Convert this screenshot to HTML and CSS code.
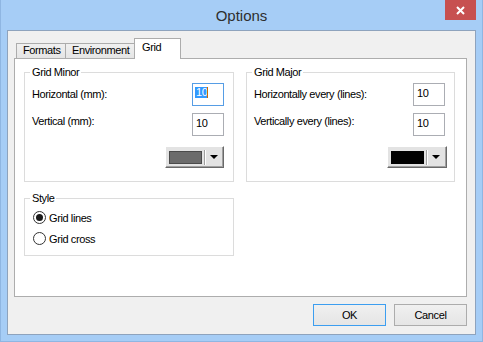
FILE: index.html
```html
<!DOCTYPE html>
<html>
<head>
<meta charset="utf-8">
<link rel="stylesheet" href="styles.css">
</head>
<body>
<div class="window">
  <div class="titlebar">
    <span></span>
    <div class="title">Options</div>
    <div class="close">
      <svg width="9" height="9" viewBox="0 0 9 9"><path d="M1 1 L8 8 M8 1 L1 8" stroke="#fff" stroke-width="2" fill="none"/></svg>
    </div>
  </div>
  <div class="client">
    <div class="tabs">
      <div class="tab t-formats">Formats</div>
      <div class="tab t-env">Environment</div>
      <div class="tab active t-grid">Grid</div>
    </div>
    <div class="page">
      <fieldset class="group">
        <legend>Grid Minor</legend>
        <div class="row">
          <span class="lbl first">Horizontal (mm):</span>
          <div class="field focused"><span class="sel">10</span><span class="caret"></span></div>
        </div>
        <div class="row r2">
          <span class="lbl">Vertical (mm):</span>
          <div class="field">10</div>
        </div>
        <div class="row r3">
          <div class="colorbtn">
            <span class="swatch gray"></span>
            <span class="sep"></span>
            <span class="arrow"></span>
          </div>
        </div>
      </fieldset>
      <fieldset class="group">
        <legend>Grid Major</legend>
        <div class="row">
          <span class="lbl first">Horizontally every (lines):</span>
          <div class="field">10</div>
        </div>
        <div class="row r2">
          <span class="lbl">Vertically every (lines):</span>
          <div class="field">10</div>
        </div>
        <div class="row r3">
          <div class="colorbtn wide">
            <span class="swatch black"></span>
            <span class="sep"></span>
            <span class="arrow"></span>
          </div>
        </div>
      </fieldset>
      <fieldset class="group style">
        <legend>Style</legend>
        <div class="radio-row"><span class="radio on"></span><span>Grid lines</span></div>
        <div class="radio-row"><span class="radio"></span><span>Grid cross</span></div>
      </fieldset>
    </div>
    <div class="buttons">
      <div class="btn default">OK</div>
      <div class="btn">Cancel</div>
    </div>
  </div>
</div>
</body>
</html>
```
FILE: styles.css
```css
html, body {
  margin: 0;
  padding: 0;
}
body {
  font-family: "Liberation Sans", Arial, sans-serif;
  font-size: 11px;
  letter-spacing: -0.4px;
  color: #000;
  background: #a6cdf6;
}
.window {
  width: 483px;
  height: 342px;
  box-sizing: border-box;
  background: #a6cdf6;
  border: 1px solid #8fb6e2;
  border-top: none;
  padding: 0 6px 6px 6px;
  display: flex;
  flex-direction: column;
}
.titlebar {
  height: 30px;
  flex: none;
  display: grid;
  grid-template-columns: 1fr auto 1fr;
  align-items: center;
}
.title {
  font-size: 15px;
  letter-spacing: 0;
  color: #2e2e2e;
  line-height: 18px;
  padding-top: 1px;
}
.close {
  justify-self: end;
  align-self: start;
  width: 31px;
  height: 20px;
  background: #c75050;
  display: flex;
  align-items: center;
  justify-content: center;
}
.client {
  flex: 1;
  background: #f0f0f0;
  border: 1px solid #8ea3bd;
  padding: 7px 8px 8px 6px;
  display: flex;
  flex-direction: column;
}
.tabs {
  display: flex;
  align-items: flex-end;
  height: 20px;
  flex: none;
  padding-left: 2px;
}
.tab {
  box-sizing: border-box;
  border: 1px solid #acacac;
  border-bottom: none;
  background: linear-gradient(#f0f0f0, #e5e5e5);
  height: 15px;
  line-height: 13px;
  padding-left: 6px;
  white-space: nowrap;
}
.t-formats { width: 50px; }
.t-env { width: 71px; margin-left: -1px; }
.tab.active {
  position: relative;
  z-index: 1;
  background: #fff;
  width: 47px;
  height: 21px;
  margin-left: -2px;
  margin-bottom: -1px;
  padding-top: 2px;
  padding-left: 7px;
}
.page {
  flex: 1;
  background: #fff;
  border: 1px solid #adadad;
  padding: 6px 0 0 9px;
  display: grid;
  grid-template-columns: 210px 209px;
  column-gap: 12px;
  row-gap: 9px;
  align-content: start;
}
.group {
  margin: 0;
  min-width: 0;
  border: 1px solid #dcdcdc;
  padding: 4px 9px 13px 7px;
}
.group legend {
  padding: 0 2px;
  margin-left: -2px;
  line-height: 14px;
}
.row {
  display: flex;
  justify-content: space-between;
  align-items: flex-start;
  line-height: 13px;
}
.lbl { margin-top: 2px; white-space: nowrap; }
.lbl.first { margin-top: 5px; }
.r2 { margin-top: 7px; }
.r3 { margin-top: 10px; justify-content: flex-end; }
.field {
  width: 32px;
  height: 23px;
  box-sizing: border-box;
  border: 1px solid #abadb3;
  background: #fff;
  padding: 4px 0 0 3px;
  line-height: 11px;
  display: flex;
  align-items: flex-start;
}
.field.focused { border-color: #569de5; padding-top: 3px; padding-left: 2px; }
.sel {
  background: #3399ff;
  color: #fff;
  line-height: 11px;
  padding: 0 0 0 1px;
}
.caret {
  width: 1px;
  height: 11px;
  background: #cc6a00;
}
.colorbtn {
  width: 59px;
  height: 22px;
  box-sizing: border-box;
  border: 1px solid;
  border-color: #fff #696969 #696969 #fff;
  box-shadow: inset -1px -1px 0 #a0a0a0;
  background: #e3e3e3;
  padding-left: 3px;
  display: flex;
  align-items: center;
}
.colorbtn.wide { width: 60px; margin-right: -2px; }
.swatch {
  width: 33px;
  height: 13px;
  box-sizing: border-box;
  border: 1px solid #4a4a4a;
}
.swatch.gray { background: #6b6b6b; }
.swatch.black { background: #000; border-color: #000; }
.sep {
  width: 0;
  height: 15px;
  margin-left: 2px;
  border-left: 1px solid #a0a0a0;
  border-right: 1px solid #fff;
}
.arrow {
  width: 0;
  height: 0;
  margin-left: 4px;
  border-left: 4px solid transparent;
  border-right: 4px solid transparent;
  border-top: 4px solid #000;
}
.group.style {
  grid-column: 1;
  padding-top: 2px;
  padding-bottom: 6px;
}
.radio-row {
  display: flex;
  align-items: center;
  height: 21px;
  gap: 3px;
}
.radio {
  width: 13px;
  height: 13px;
  box-sizing: border-box;
  margin-left: 1px;
  border: 1px solid #333;
  border-radius: 50%;
  background: #fff;
  display: flex;
  align-items: center;
  justify-content: center;
}
.radio.on::after {
  content: "";
  width: 7px;
  height: 7px;
  border-radius: 50%;
  background: #1a1a1a;
}
.buttons {
  flex: none;
  display: flex;
  justify-content: flex-end;
  gap: 8px;
  margin-top: 7px;
}
.btn {
  width: 73px;
  height: 22px;
  box-sizing: border-box;
  border: 1px solid #acacac;
  background: linear-gradient(#f0f0f0, #e5e5e5);
  display: flex;
  align-items: center;
  justify-content: center;
}
.btn.default { border-color: #3c9ef0; }
```
